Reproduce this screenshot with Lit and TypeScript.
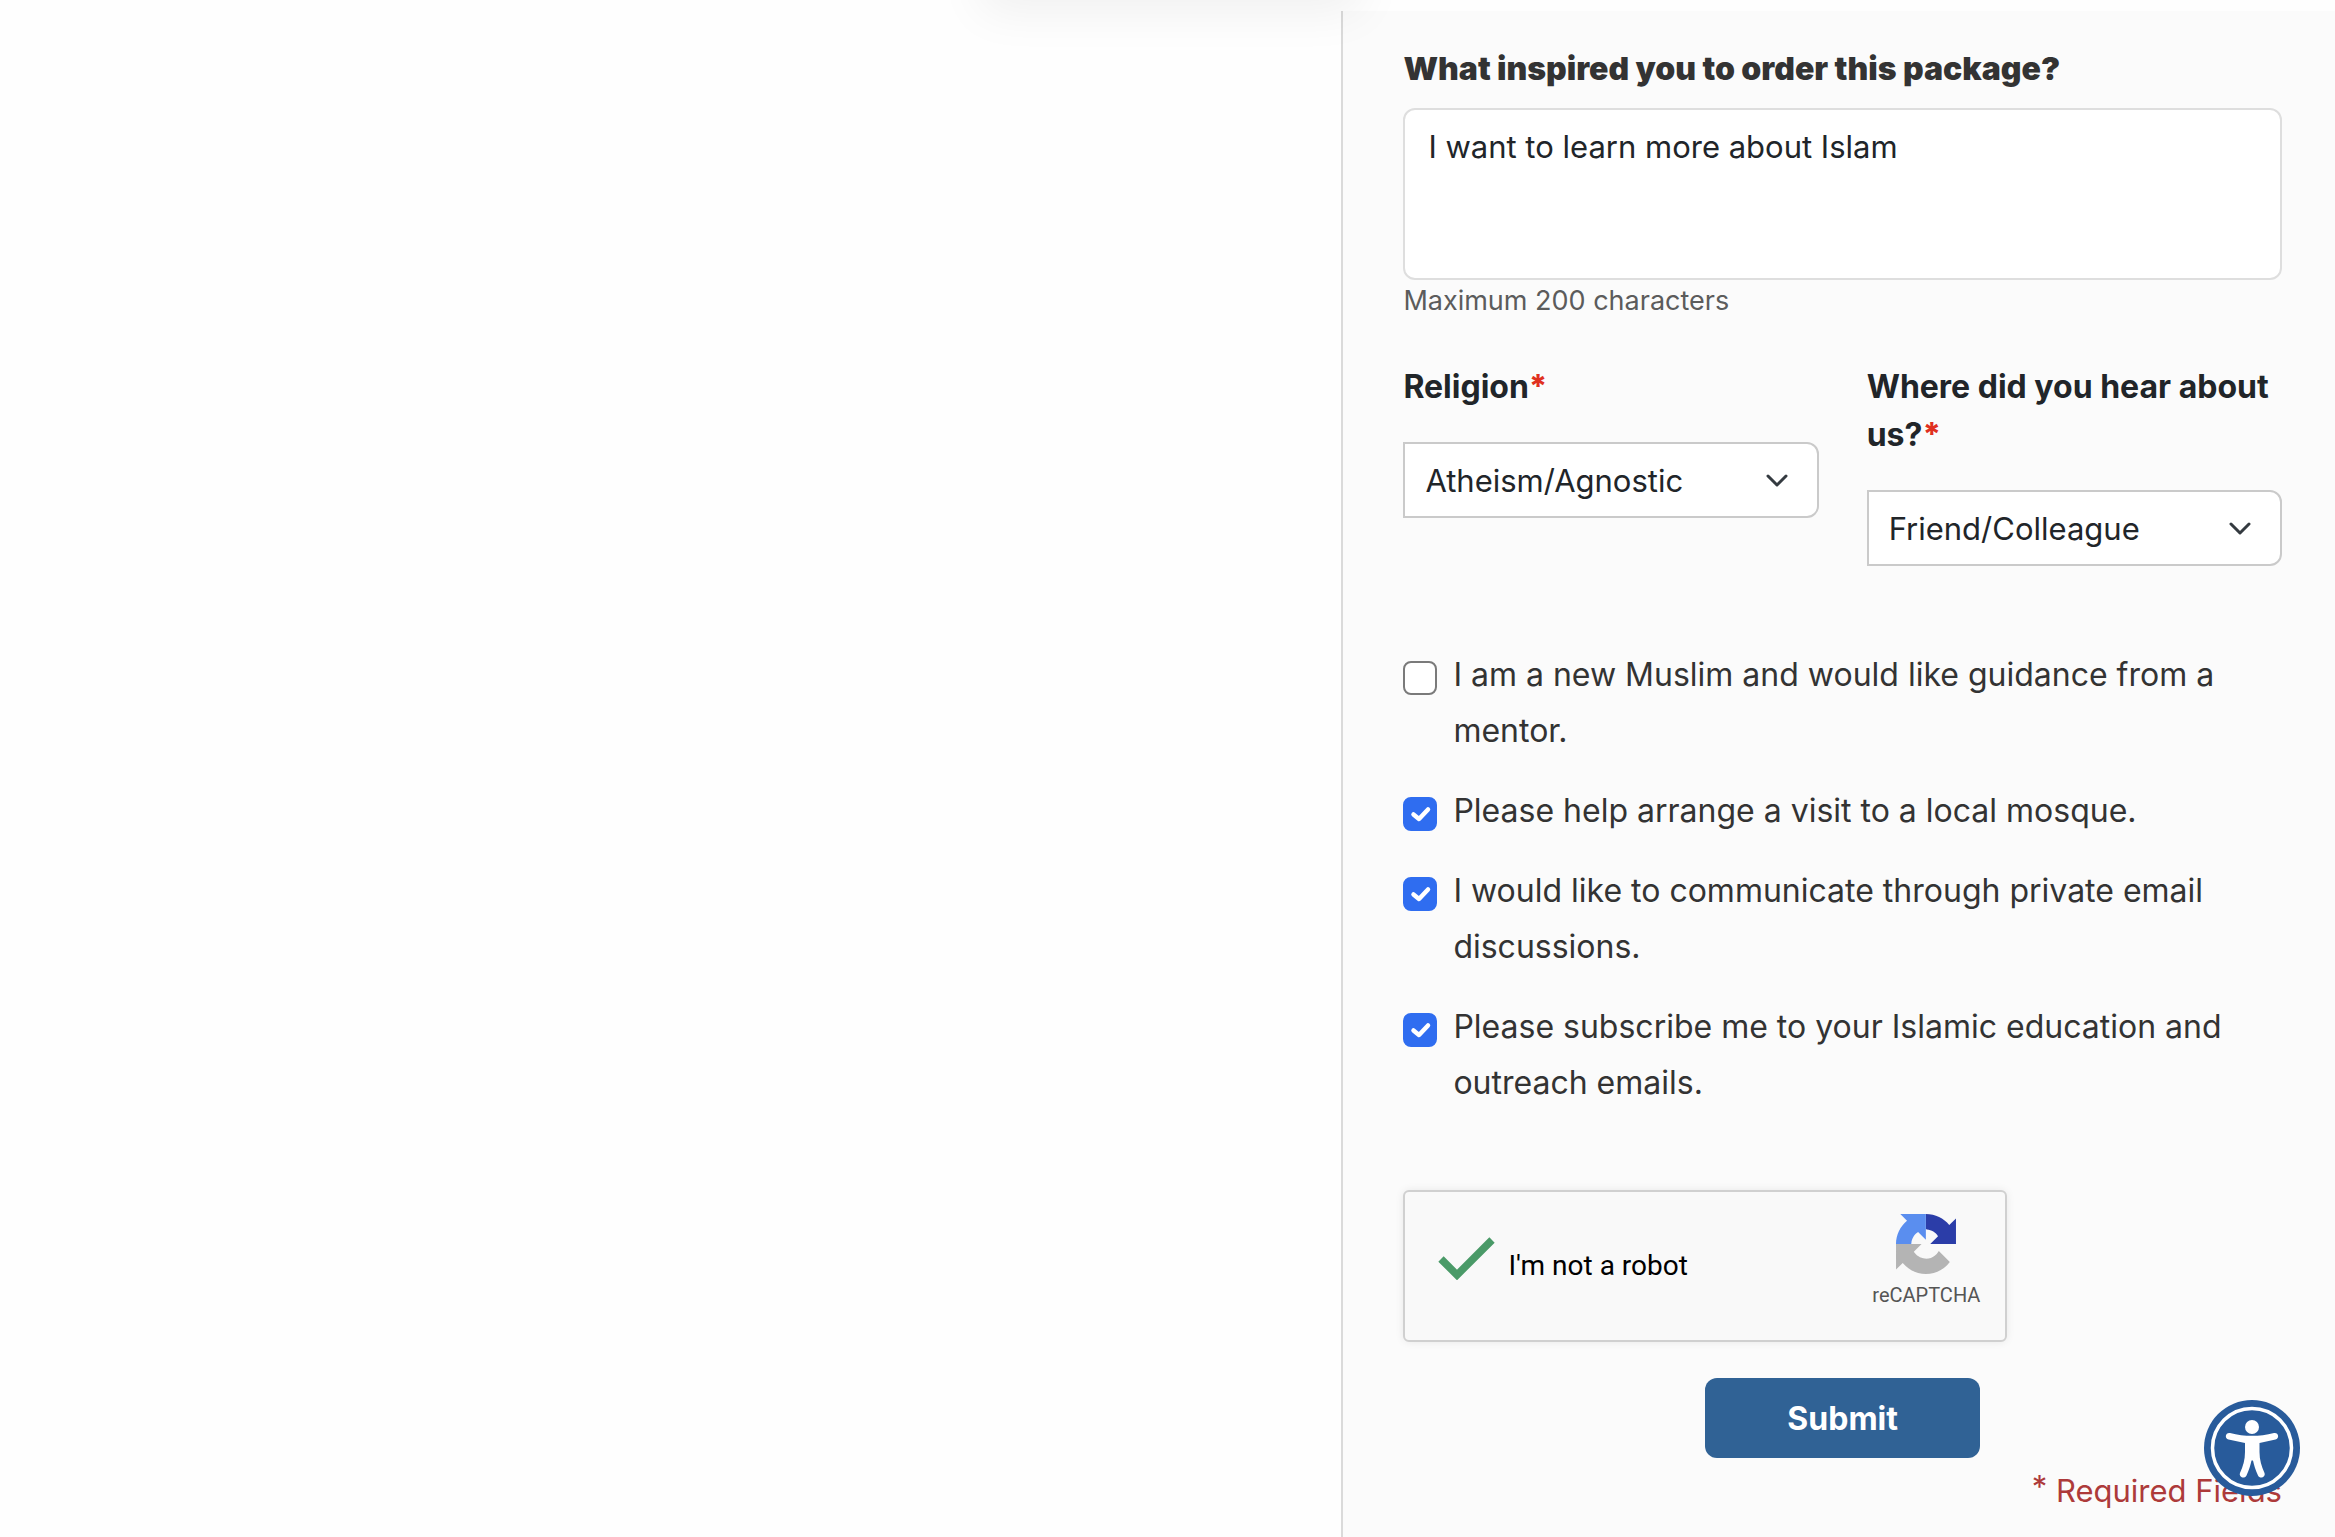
import { LitElement, html, css, svg } from "lit";
import { customElement, state } from "lit/decorators.js";

interface Preference {
  id: string;
  label: string;
  checked: boolean;
}

const chevron = svg`<path d="M2 2l9 9 9-9" fill="none" stroke="#343a40" stroke-width="3" stroke-linecap="round" stroke-linejoin="round"></path>`;

@customElement("app-root")
export class AppRoot extends LitElement {
  static styles = css`
    :host {
      display: block;
      font-family: Inter, "Liberation Sans", sans-serif;
      font-size: 32px;
      line-height: 48px;
      color: #212529;
      background: #fefefe;
    }
    * {
      box-sizing: border-box;
    }
    .page {
      position: relative;
      display: grid;
      grid-template-columns: 27fr 20fr;
      min-height: 100vh;
      padding-top: 11px;
      overflow: hidden;
    }
    .card-shadow {
      position: absolute;
      left: 42%;
      bottom: 100%;
      width: 380px;
      height: 100px;
      box-shadow: 0 12px 48px rgba(0, 0, 0, 0.06);
      pointer-events: none;
    }
    .panel {
      grid-column: 2;
      display: flex;
      flex-direction: column;
      padding: 34px 53px 11px 60px;
      border-left: 2px solid #dadada;
      background: #fbfbfb;
    }
    .title {
      font-weight: 900;
      color: #333;
    }
    .message {
      display: block;
      width: 100%;
      height: 172px;
      margin-top: 15px;
      padding: 13px 23px;
      border: 2px solid #dedede;
      border-radius: 12px;
      background: #fff;
      color: #212529;
      font: inherit;
      font-size: 31px;
      resize: none;
    }
    .hint {
      margin: 0;
      font-size: 27px;
      line-height: 42px;
      color: #5c5c5c;
    }
    .choices {
      display: grid;
      grid-template-columns: 1fr 1fr;
      align-items: start;
      gap: 48px;
      margin-top: 41px;
    }
    .choice {
      display: flex;
      flex-direction: column;
      gap: 31px;
    }
    .choice label {
      font-weight: 700;
    }
    .star {
      font-weight: 800;
      color: #e03020;
    }
    .select-box {
      display: grid;
      align-items: center;
    }
    .select-box > * {
      grid-area: 1 / 1;
    }
    .select-box select {
      width: 100%;
      height: 76px;
      padding: 2px 64px 0 20px;
      border: 2px solid #cacaca;
      border-radius: 0 12px 12px 0;
      background: #fff;
      color: #212529;
      font: inherit;
      font-size: 31px;
      appearance: none;
    }
    .chevron {
      justify-self: end;
      width: 22px;
      height: 13px;
      margin-right: 31px;
      pointer-events: none;
    }
    .preferences {
      display: flex;
      flex-direction: column;
      gap: 24px;
      margin: 81px 0 0;
      padding: 0;
      border: 0;
    }
    .preference {
      display: grid;
      grid-template-columns: 34px 1fr;
      column-gap: 16px;
      line-height: 56px;
      color: #333;
    }
    .tick {
      display: grid;
      width: 34px;
      height: 34px;
      margin-top: 14px;
    }
    .tick > * {
      grid-area: 1 / 1;
      width: 34px;
      height: 34px;
      margin: 0;
    }
    .tick input {
      border: 2px solid #7a7a7a;
      border-radius: 8px;
      background: #fff;
      appearance: none;
    }
    .tick input:checked {
      border-color: #2f6df0;
      background: #2f6df0;
    }
    .tick svg {
      pointer-events: none;
    }
    .tick input:not(:checked) + svg {
      visibility: hidden;
    }
    .captcha {
      display: flex;
      align-items: flex-start;
      justify-content: space-between;
      width: 604px;
      max-width: 100%;
      height: 152px;
      margin-top: 79px;
      padding: 22px 25px 0 33px;
      border: 2px solid #d0d0d0;
      border-radius: 6px;
      background: #f9f9f9;
      box-shadow: 0 0 8px rgba(0, 0, 0, 0.08);
      font-family: Roboto, sans-serif;
    }
    .robot {
      display: flex;
      gap: 12px;
      margin-top: 22px;
      font-size: 28px;
      line-height: 60px;
      color: #000;
    }
    .robot-tick {
      display: grid;
      width: 58px;
      height: 44px;
    }
    .robot-tick > * {
      grid-area: 1 / 1;
      width: 58px;
      height: 44px;
      margin: 0;
    }
    .robot-tick input {
      appearance: none;
    }
    .robot-tick svg {
      pointer-events: none;
    }
    .brand {
      display: flex;
      flex-direction: column;
      align-items: center;
      gap: 9px;
      font-size: 20px;
      line-height: 24px;
      color: #555;
    }
    .brand svg {
      width: 60px;
      height: 60px;
    }
    .submit {
      align-self: center;
      width: 275px;
      height: 80px;
      margin-top: 36px;
      padding: 2px 0 0;
      border: 0;
      border-radius: 12px;
      background: #306295;
      color: #fff;
      font: inherit;
      font-weight: 700;
    }
    .required {
      margin: 9px 0 0;
      font-size: 31px;
      text-align: right;
      color: #ad3a3a;
    }
    .required sup {
      line-height: 0;
      font-size: 31px;
      vertical-align: 4px;
    }
    .accessibility {
      position: fixed;
      right: 35px;
      bottom: 41px;
      width: 96px;
      height: 96px;
      padding: 0;
      border: 0;
      border-radius: 50%;
      background: none;
    }
    .accessibility svg {
      display: block;
    }
  `;

  @state() private preferences: Preference[] = [
    { id: "mentor", label: "I am a new Muslim and would like guidance from a mentor.", checked: false },
    { id: "visit", label: "Please help arrange a visit to a local mosque.", checked: true },
    { id: "email", label: "I would like to communicate through private email discussions.", checked: true },
    { id: "subscribe", label: "Please subscribe me to your Islamic education and outreach emails.", checked: true },
  ];

  private toggle(id: string) {
    this.preferences = this.preferences.map((p) => (p.id === id ? { ...p, checked: !p.checked } : p));
  }

  private renderSelect(id: string, label: string, value: string) {
    return html`
      <div class="choice">
        <label for=${id}>${label}<span class="star">*</span></label>
        <div class="select-box">
          <select id=${id} required>
            <option>${value}</option>
          </select>
          <svg class="chevron" viewBox="0 0 22 13" aria-hidden="true">${chevron}</svg>
        </div>
      </div>
    `;
  }

  private renderPreference(p: Preference) {
    return html`
      <div class="preference">
        <span class="tick">
          <input type="checkbox" id=${p.id} .checked=${p.checked} @change=${() => this.toggle(p.id)} />
          <svg viewBox="0 0 34 34" aria-hidden="true">
            <path d="M10.5 17.5l5.5 4.5 9-9.5" fill="none" stroke="#fff" stroke-width="4.5" stroke-linecap="round" stroke-linejoin="round"></path>
          </svg>
        </span>
        <label for=${p.id}>${p.label}</label>
      </div>
    `;
  }

  render() {
    return html`
      <main class="page">
        <form class="panel" @submit=${(e: Event) => e.preventDefault()}>
          <label class="title" for="message">What inspired you to order this package?</label>
          <textarea class="message" id="message" maxlength="200" .value=${"I want to learn more about Islam"}></textarea>
          <p class="hint">Maximum 200 characters</p>

          <div class="choices">
            ${this.renderSelect("religion", "Religion", "Atheism/Agnostic")}
            ${this.renderSelect("source", "Where did you hear about us?", "Friend/Colleague")}
          </div>

          <fieldset class="preferences">${this.preferences.map((p) => this.renderPreference(p))}</fieldset>

          <div class="captcha">
            <div class="robot">
              <span class="robot-tick">
                <input type="checkbox" id="robot" checked />
                <svg viewBox="0 0 58 44" aria-hidden="true">
                  <path d="M3 23l16 16L54 4" fill="none" stroke="#4a9a68" stroke-width="7.5"></path>
                </svg>
              </span>
              <label for="robot">I'm not a robot</label>
            </div>
            <div class="brand">
              <svg viewBox="0 0 64 64" aria-hidden="true">
                <path fill="#2b3da8" d="M64 31.955l-.033-1.37V4.687l-7.16 7.16C50.948 4.674 42.033.093 31.86.093V16.353c.485 0 .86.057 1.135.163 4.976.393 9.288 3.14 11.828 7.124l-8.307 8.307z"></path>
                <path fill="#5a8eef" d="M31.862.094l-1.37.033H4.594l7.16 7.16C4.58 13.147 0 22.06 0 32.046H16.26c0-.485.057-.86.163-1.135.393-4.976 3.14-9.288 7.124-11.828l8.307 8.307z"></path>
                <path fill="#b4b4b4" d="M.001 32.045l.033 1.37v25.898l7.16-7.16c5.86 7.173 14.774 11.754 24.76 11.754 10.4 0 19.622-4.96 25.458-12.64l-11.736-11.86a15.55 15.55 0 0 1-4.754 5.334c-2.05 1.6-4.952 2.906-8.968 2.906-.485 0-.86-.057-1.135-.163-4.976-.393-9.288-3.14-11.828-7.124l8.307-8.307z"></path>
              </svg>
              <span>reCAPTCHA</span>
            </div>
          </div>

          <button class="submit" type="submit">Submit</button>
          <p class="required"><sup>*</sup> Required Fields</p>
        </form>
        <div class="card-shadow"></div>
        <button class="accessibility" type="button" aria-label="Accessibility options">
          <svg viewBox="0 0 96 96" aria-hidden="true">
            <circle cx="48" cy="48" r="48" fill="#285b9b"></circle>
            <circle cx="48" cy="48" r="39.5" fill="none" stroke="#fff" stroke-width="3.5"></circle>
            <circle cx="48" cy="27" r="7" fill="#fff"></circle>
            <path fill="#fff" d="M26 33c-4.5-.8-5.8 5.2-1.5 6.5L41 43v9c0 8-2 14-5 21-1.5 4 4.5 6.5 6.5 2.5C45 70 46.5 65 47.5 60.5h1.500c1 4.5 2.500 9.500 5 15 2 4 8 1.500 6.500-2.500-3-7-5-13-5-21v-9l16-3.500c4.300-1.300 3-7.300-1.500-6.500C55 36.800 41 36.800 26 33z"></path>
          </svg>
        </button>
      </main>
    `;
  }
}
